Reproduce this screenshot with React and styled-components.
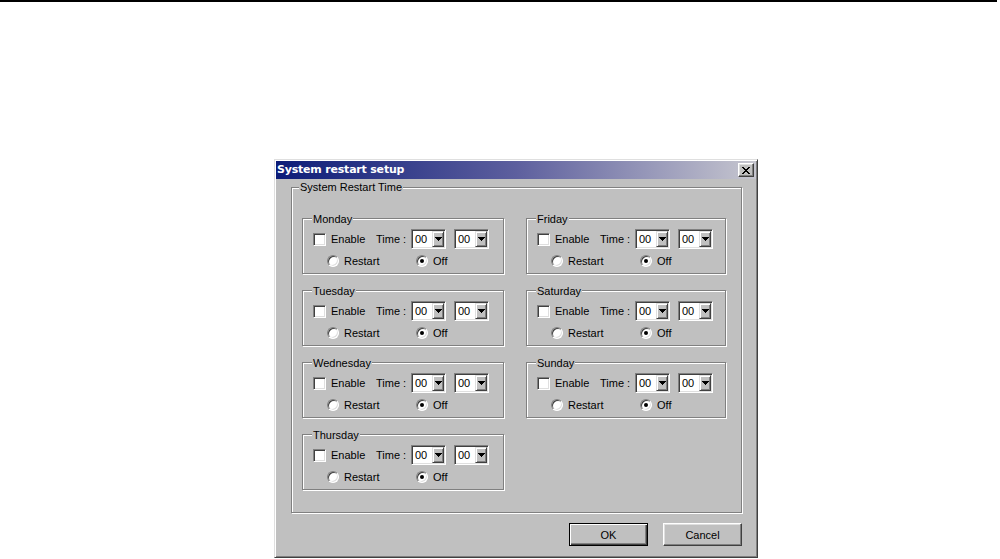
import React from 'react';
import styled, { createGlobalStyle } from 'styled-components';

const GlobalStyle = createGlobalStyle`
  html, body { margin: 0; padding: 0; background: #fff; overflow: hidden; }
  body { font-family: "Liberation Sans", Arial, sans-serif; font-size: 11px; color: #000; }
`;

const Page = styled.div`
  width: 1000px;
  height: 559px;
  overflow: hidden;
`;

const TopRule = styled.div`
  width: 997px;
  height: 2px;
  background: #000;
`;

const Dialog = styled.div`
  box-sizing: border-box;
  margin: 157px 0 0 274px;
  width: 484px;
  height: 399px;
  background: #c0c0c0;
  border: 1px solid;
  border-color: #dfdfdf #404040 #404040 #dfdfdf;
  box-shadow: inset 1px 1px 0 #fff, inset -1px -1px 0 #808080;
  padding: 1px;
  display: flex;
  flex-direction: column;
`;

const TitleBar = styled.div`
  height: 18px;
  display: flex;
  align-items: center;
  justify-content: space-between;
  padding: 0 2px 0 1px;
  background: linear-gradient(to right, #0c1c78 0%, #5d5f9e 50%, #c6c6cf 100%);
`;

const TitleText = styled.span`
  font-family: "DejaVu Sans", Verdana, sans-serif;
  font-weight: bold;
  font-size: 11px;
  letter-spacing: -0.2px;
  line-height: 18px;
  color: #fff;
  white-space: nowrap;
`;

const CloseButton = styled.span`
  box-sizing: border-box;
  width: 16px;
  height: 14px;
  background: #c0c0c0;
  border: 1px solid;
  border-color: #fff #404040 #404040 #fff;
  box-shadow: inset -1px -1px 0 #808080, inset 1px 1px 0 #dfdfdf;
  display: flex;
  align-items: center;
  justify-content: center;
`;

const Body = styled.div`
  display: flex;
  flex-direction: column;
  padding: 8px 14px 0 15px;
`;

const GroupBox = styled.div`
  position: relative;
  box-sizing: border-box;
  border: 1px solid #808080;
  box-shadow: inset 1px 1px 0 #fff, 1px 1px 0 #fff;
`;

const OuterGroup = styled(GroupBox)`
  width: 451px;
  height: 326px;
  padding: 30px 0 0 10px;
  display: grid;
  grid-template-columns: 202px 200px;
  grid-template-rows: repeat(4, 56px);
  grid-auto-flow: column;
  column-gap: 22px;
  row-gap: 16px;
  align-content: start;
`;

const GroupLabel = styled.span`
  position: absolute;
  top: ${(p) => p.$top}px;
  left: ${(p) => p.$left}px;
  padding: 0 1px;
  background: #c0c0c0;
  line-height: 13px;
  white-space: nowrap;
`;

const DayBox = styled(GroupBox)`
  display: flex;
  flex-direction: column;
  padding: 10px 0 0 10px;
`;

const TopRow = styled.div`
  display: flex;
  align-items: center;
  height: 20px;
`;

const BottomRow = styled.div`
  display: flex;
  align-items: center;
  height: 14px;
  margin-top: 5px;
  padding-left: 14px;
`;

const CheckBox = styled.span`
  box-sizing: border-box;
  width: 13px;
  height: 13px;
  flex: none;
  background: #fff;
  border: 1px solid;
  border-color: #808080 #fff #fff #808080;
  box-shadow: inset 1px 1px 0 #404040, inset -1px -1px 0 #dfdfdf;
`;

const Label = styled.span`
  width: ${(p) => p.$width}px;
  margin-left: ${(p) => p.$gap || 0}px;
  line-height: 13px;
  white-space: nowrap;
  flex: none;
`;

const Combo = styled.div`
  box-sizing: border-box;
  width: 35px;
  height: 20px;
  flex: none;
  margin-right: ${(p) => p.$gap || 0}px;
  display: flex;
  align-items: stretch;
  background: #fff;
  border: 1px solid;
  border-color: #808080 #fff #fff #808080;
  box-shadow: inset 1px 1px 0 #404040, inset -1px -1px 0 #dfdfdf;
  padding: 1px;
`;

const ComboValue = styled.span`
  flex: 1;
  padding-left: 2px;
  line-height: 16px;
  color: #000;
`;

const ComboArrow = styled.span`
  box-sizing: border-box;
  width: 12px;
  background: #c0c0c0;
  border: 1px solid;
  border-color: #dfdfdf #404040 #404040 #dfdfdf;
  box-shadow: inset 1px 1px 0 #fff, inset -1px -1px 0 #808080;
  display: flex;
  align-items: center;
  justify-content: center;
`;

const RadioOption = styled.span`
  display: flex;
  align-items: center;
  width: ${(p) => p.$width}px;
  flex: none;
`;

const Radio = styled.span`
  box-sizing: border-box;
  width: 12px;
  height: 12px;
  flex: none;
  border-radius: 50%;
  background: #fff;
  border: 1px solid;
  border-color: #808080 #fff #fff #808080;
  box-shadow: inset 1px 1px 0 #404040, inset -1px -1px 0 #dfdfdf;
  display: flex;
  align-items: center;
  justify-content: center;
  margin-right: 5px;
`;

const RadioDot = styled.span`
  width: 4px;
  height: 4px;
  border-radius: 50%;
  background: #000;
`;

const ButtonRow = styled.div`
  display: flex;
  justify-content: flex-end;
  gap: 15px;
  margin-top: 10px;
`;

const Button = styled.button`
  box-sizing: border-box;
  width: 79px;
  height: 23px;
  margin: 0;
  padding: 0;
  font: 11px "Liberation Sans", Arial, sans-serif;
  color: #000;
  background: #c0c0c0;
  border: 1px solid;
  border-color: ${(p) => (p.$default ? '#000' : '#fff #404040 #404040 #fff')};
  box-shadow: ${(p) =>
    p.$default
      ? 'inset 1px 1px 0 #fff, inset -1px -1px 0 #404040, inset -2px -2px 0 #808080'
      : 'inset -1px -1px 0 #808080, inset 1px 1px 0 #dfdfdf'};
`;

const ArrowIcon = () => (
  <svg width="7" height="4" viewBox="0 0 7 4" shapeRendering="crispEdges">
    <rect x="0" y="0" width="7" height="1" fill="#000" />
    <rect x="1" y="1" width="5" height="1" fill="#000" />
    <rect x="2" y="2" width="3" height="1" fill="#000" />
    <rect x="3" y="3" width="1" height="1" fill="#000" />
  </svg>
);

const CloseIcon = () => (
  <svg width="8" height="7" viewBox="0 0 8 7" shapeRendering="crispEdges">
    {[0, 1, 2, 3, 4, 5, 6].map((i) => (
      <React.Fragment key={i}>
        <rect x={i} y={i} width="2" height="1" fill="#000" />
        <rect x={6 - i} y={i} width="2" height="1" fill="#000" />
      </React.Fragment>
    ))}
  </svg>
);

const TimeCombo = ({ gap }) => (
  <Combo $gap={gap}>
    <ComboValue>00</ComboValue>
    <ComboArrow>
      <ArrowIcon />
    </ComboArrow>
  </Combo>
);

const DayGroup = ({ day }) => (
  <DayBox>
    <GroupLabel $top={-6} $left={9}>{day}</GroupLabel>
    <TopRow>
      <CheckBox />
      <Label $width={45} $gap={5}>Enable</Label>
      <Label $width={35}>Time :</Label>
      <TimeCombo gap={8} />
      <TimeCombo />
    </TopRow>
    <BottomRow>
      <RadioOption $width={89}>
        <Radio />
        Restart
      </RadioOption>
      <RadioOption $width={40}>
        <Radio>
          <RadioDot />
        </Radio>
        Off
      </RadioOption>
    </BottomRow>
  </DayBox>
);

const days = ['Monday', 'Tuesday', 'Wednesday', 'Thursday', 'Friday', 'Saturday', 'Sunday'];

export default function App() {
  return (
    <Page>
      <GlobalStyle />
      <TopRule />
      <Dialog>
        <TitleBar>
          <TitleText>System restart setup</TitleText>
          <CloseButton>
            <CloseIcon />
          </CloseButton>
        </TitleBar>
        <Body>
          <OuterGroup>
            <GroupLabel $top={-7} $left={7}>System Restart Time</GroupLabel>
            {days.map((d) => (
              <DayGroup key={d} day={d} />
            ))}
          </OuterGroup>
          <ButtonRow>
            <Button $default>OK</Button>
            <Button>Cancel</Button>
          </ButtonRow>
        </Body>
      </Dialog>
    </Page>
  );
}
